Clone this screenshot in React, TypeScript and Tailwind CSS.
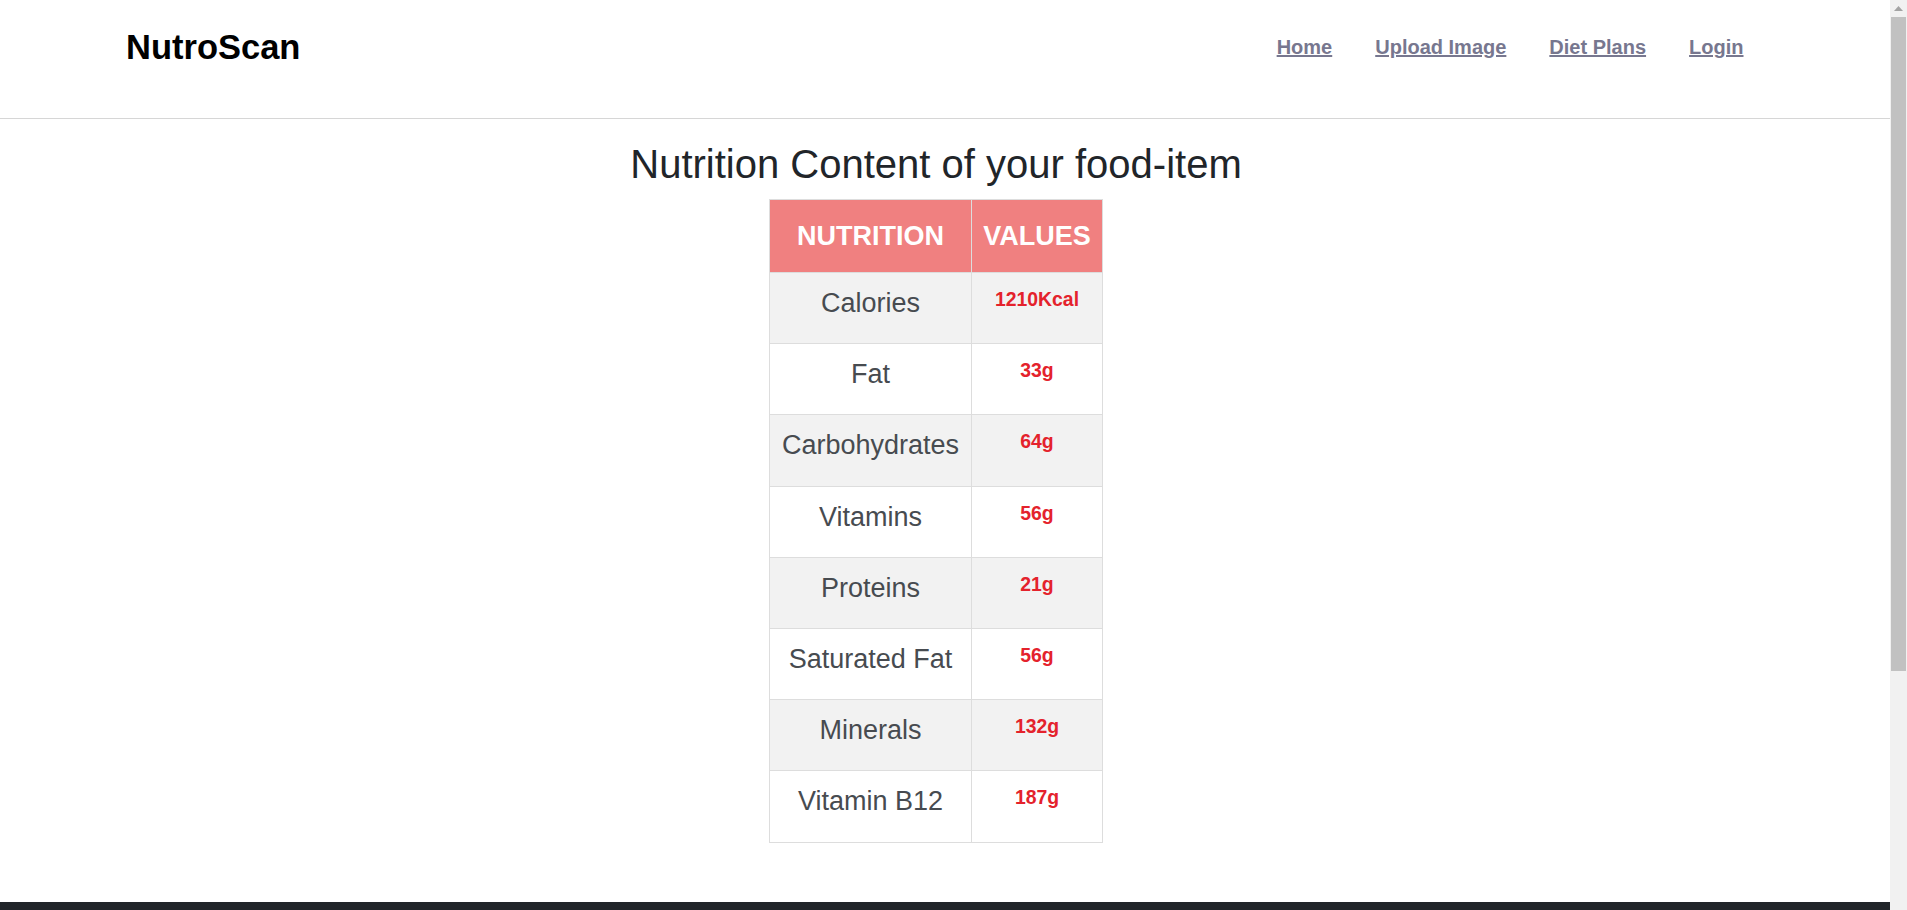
import React from "react";

const rows: [string, string][] = [
  ["Calories", "1210Kcal"],
  ["Fat", "33g"],
  ["Carbohydrates", "64g"],
  ["Vitamins", "56g"],
  ["Proteins", "21g"],
  ["Saturated Fat", "56g"],
  ["Minerals", "132g"],
  ["Vitamin B12", "187g"],
];

export default function App() {
  return (
    <div className="flex h-[910px] w-full overflow-hidden bg-white font-['Liberation_Sans',Arial,sans-serif]">
      <div className="min-w-0 flex-1 overflow-hidden">
        <header className="h-[119px] border-b border-[#d6d6d6] pl-[126px] pr-[125px]">
          <div className="flex h-[94px] items-center justify-between">
            <div className="text-[34.5px] font-bold leading-none text-black">NutroScan</div>
            <nav className="flex items-center">
              {["Home", "Upload Image", "Diet Plans", "Login"].map((l) => (
                <a
                  key={l}
                  href="#"
                  className="px-[21.5px] text-[20px] font-bold leading-none text-[#77778f] underline"
                >
                  {l}
                </a>
              ))}
            </nav>
          </div>
        </header>

        <main className="flex flex-col items-center pr-[18px]">
          <h2 className="mt-[22px] mb-[12px] text-[40px] font-normal leading-[46px] text-[#212529]">
            Nutrition Content of your food-item
          </h2>
          <table className="w-[333px] table-fixed border-collapse border border-[#dddddd]">
            <colgroup>
              <col className="w-[202px]" />
              <col className="w-[131px]" />
            </colgroup>
            <thead>
              <tr className="h-[73px] bg-[#f08080]">
                <th className="border border-[#dddddd] p-0 text-center align-middle text-[27px] font-bold text-white">
                  NUTRITION
                </th>
                <th className="border border-[#dddddd] p-0 text-center align-middle text-[27px] font-bold text-white">
                  VALUES
                </th>
              </tr>
            </thead>
            <tbody>
              {rows.map(([n, v], i) => (
                <tr key={n} className={`h-[71.2px] ${i % 2 === 0 ? "bg-[#f2f2f2]" : "bg-white"}`}>
                  <td className="border border-[#dddddd] px-0 pt-[15px] pb-0 text-center align-top text-[27px] leading-[31px] text-[#474b50]">
                    {n}
                  </td>
                  <td className="border border-[#dddddd] px-0 pt-[15px] pb-0 text-center align-top text-[19.4px] font-bold leading-[22px] text-[#e4222c]">
                    {v}
                  </td>
                </tr>
              ))}
            </tbody>
          </table>
        </main>

        <footer className="mt-[59px] h-[312px] bg-[#212529]" />
      </div>

      <div className="flex w-[17px] shrink-0 flex-col items-center bg-[#f1f1f1]">
        <div className="flex h-[17px] w-full items-center justify-center">
          <svg width="9" height="5" viewBox="0 0 9 5">
            <path d="M4.5 0 L9 5 L0 5 Z" fill="#a3a3a3" />
          </svg>
        </div>
        <div className="h-[654px] w-[15px] bg-[#c1c1c1]" />
      </div>
    </div>
  );
}
